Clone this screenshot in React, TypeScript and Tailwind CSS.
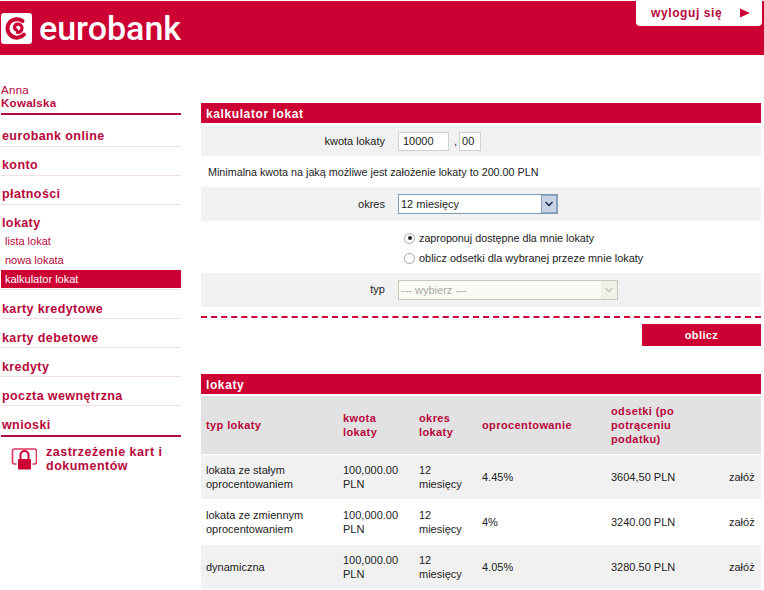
import { ChevronDown } from 'lucide-react';

const navTop = ['eurobank online', 'konto', 'płatności'];
const navBottom = ['karty kredytowe', 'karty debetowe', 'kredyty', 'poczta wewnętrzna'];

const deposits = [
  { type: ['lokata ze stałym', 'oprocentowaniem'], rate: '4.45%', interest: '3604,50 PLN', bg: 'bg-[#f1f1f1]' },
  { type: ['lokata ze zmiennym', 'oprocentowaniem'], rate: '4%', interest: '3240.00 PLN', bg: 'bg-white' },
  { type: ['dynamiczna'], rate: '4.05%', interest: '3280.50 PLN', bg: 'bg-[#f1f1f1]' },
];

const cols = 'grid grid-cols-[137px_76px_63px_129px_118px_37px] items-center';

function NavItem({ label, pad }: { label: string; pad: string }) {
  return (
    <div className={`h-[29px] flex items-center pl-px ${pad} border-b border-[#f0dfe4] text-[12.5px] font-bold tracking-[0.4px] text-[#b8073a]`}>
      {label}
    </div>
  );
}

function SectionBar({ label }: { label: string }) {
  return (
    <div className="bg-[#cc0033] text-white text-[12px] font-bold tracking-[0.6px] pl-[5px] pt-[2px] flex items-center h-full">
      {label}
    </div>
  );
}

function Logo() {
  return (
    <svg width="31" height="31" viewBox="0 0 31 31" className="shrink-0">
      <rect width="31" height="31" rx="3" fill="#fff" />
      <path d="M21.500 8C18.500 5.500 12.500 5.200 9 9c-4 4.500-3 11 1.500 14 4 2.700 9.500 2 12.500-1.500" fill="none" stroke="#cc0033" strokeWidth="4" strokeLinecap="round" />
      <path d="M15.500 17c-3-1-2.500-5.500 1-5.800 3-.2 5 2 4.300 4.800-.5 2-2.300 3.500-4.300 3.300" fill="none" stroke="#cc0033" strokeWidth="3.200" strokeLinecap="round" />
    </svg>
  );
}

export default function App() {
  return (
    <div className="w-[764px] h-[590px] overflow-hidden bg-white text-[11px] text-[#222] font-['Liberation_Sans',Arial,sans-serif]">
      <header className="h-[54px] mt-px bg-[#cc0033] flex justify-between">
        <div className="flex items-center gap-[7px] pl-px pt-px">
          <Logo />
          <span className="font-['Roboto',sans-serif] font-medium text-[34px] leading-none text-white pb-px">eurobank</span>
        </div>
        <div className="h-[26px] w-[126px] -mt-px mr-[2px] bg-white rounded-b-[4px] flex items-center justify-between pl-[15px] pr-[12px] text-[#b8073a] text-[12px] font-bold tracking-[0.6px]">
          wyloguj się
          <svg width="10" height="10" viewBox="0 0 10 10">
            <path d="M0 0.500 10 5 0 9.500z" fill="#cc0033" />
          </svg>
        </div>
      </header>

      <div className="flex">
        <aside className="w-[180px] ml-px mr-5 shrink-0 pt-[29px]">
          <div className="h-[31px] border-b-2 border-[#b30a3c] text-[11.5px] leading-[12px] text-[#b8073a] tracking-[0.3px]">
            <div>Anna</div>
            <div className="font-bold mt-px">Kowalska</div>
          </div>
          <div className="h-[3px]" />
          {navTop.map((n) => (
            <NavItem key={n} label={n} pad="pt-[8px]" />
          ))}
          <div className="h-[27px] flex items-center pl-px pt-[9px] text-[12.5px] font-bold tracking-[0.4px] text-[#b8073a]">lokaty</div>
          <div className="h-[19px] flex items-center pl-[4px] text-[#b8073a]">lista lokat</div>
          <div className="h-[19px] flex items-center pl-[4px] text-[#b8073a]">nowa lokata</div>
          <div className="h-[18px] flex items-center pl-[4px] bg-[#cc0033] text-white">kalkulator lokat</div>
          <div className="h-[2px] border-b border-[#f0dfe4]" />
          {navBottom.map((n) => (
            <NavItem key={n} label={n} pad="pt-[10px]" />
          ))}
          <div className="h-[29px] flex items-center pl-px pt-[10px] text-[12.5px] font-bold tracking-[0.4px] text-[#b8073a]">wnioski</div>
          <div className="h-[2px] bg-[#b30a3c]" />
          <div className="flex gap-[9px] pl-[10px] pt-[11px]">
            <svg width="26" height="22" viewBox="0 0 26 22" className="shrink-0">
              <rect x="1.500" y="1" width="24" height="15" rx="2" fill="none" stroke="#e0355f" strokeWidth="1.600" />
              <rect x="5.500" y="7" width="16" height="15" fill="#fff" />
              <path d="M9.500 11V7a4 4 0 0 1 8 0v4" fill="none" stroke="#cc0033" strokeWidth="2" />
              <rect x="7" y="11" width="13" height="10.500" rx="1" fill="#cc0033" />
            </svg>
            <div className="text-[12.5px] leading-[14px] font-bold tracking-[0.5px] text-[#b8073a] -mt-[3px]">
              zastrzeżenie kart i dokumentów
            </div>
          </div>
        </aside>

        <main className="w-[560px] pt-[48px]">
          <div className="h-[20px]">
            <SectionBar label="kalkulator lokat" />
          </div>
          <div className="mt-[3px] h-[30px] bg-[#f1f1f1] flex items-center">
            <span className="w-[184px] text-right">kwota lokaty</span>
            <div className="ml-[13px] w-[51px] h-[19px] bg-white border border-[#d0d0d0] flex items-center pl-[4px]">10000</div>
            <span className="ml-[5px] mr-[2px]">,</span>
            <div className="w-[22px] h-[19px] bg-white border border-[#d0d0d0] flex items-center pl-[2px]">00</div>
          </div>
          <p className="h-[31px] flex items-center pl-[7px] pt-[2px] text-[10.75px]">
            Minimalna kwota na jaką możliwe jest założenie lokaty to 200.00 PLN
          </p>
          <div className="h-[34px] bg-[#f1f1f1] flex items-center">
            <span className="w-[184px] text-right">okres</span>
            <div className="ml-[13px] w-[160px] h-[20px] bg-white border border-[#7f9db9] flex items-center justify-between pl-[2px]">
              12 miesięcy
              <span className="w-[16px] h-[18px] bg-[#c9d2e2] border border-[#8ea3c6] flex items-center justify-center">
                <ChevronDown size={12} strokeWidth={3.5} className="text-[#22324f]" />
              </span>
            </div>
          </div>
          <div className="h-[52px] pl-[203px] pt-[2px] flex flex-col justify-center gap-[6px]">
            <label className="flex items-center gap-[4px] h-[14px] text-[10.75px]">
              <span className="w-[11px] h-[11px] rounded-full bg-white border border-[#a8a8a8] flex items-center justify-center">
                <span className="w-[4px] h-[4px] rounded-full bg-[#222]" />
              </span>
              zaproponuj dostępne dla mnie lokaty
            </label>
            <label className="flex items-center gap-[4px] h-[14px] text-[10.95px]">
              <span className="w-[11px] h-[11px] rounded-full bg-white border border-[#a8a8a8]" />
              oblicz odsetki dla wybranej przeze mnie lokaty
            </label>
          </div>
          <div className="h-[34px] bg-[#f1f1f1] flex items-center">
            <span className="w-[184px] text-right pb-[2px]">typ</span>
            <div className="ml-[13px] w-[220px] h-[20px] bg-[#fbfbf6] border border-[#c9c7ba] flex items-center justify-between pl-[2px] text-[#a8a8a8]">
              --- wybierz ---
              <span className="w-[16px] h-[18px] bg-[#f1f1e8] flex items-center justify-center">
                <ChevronDown size={12} strokeWidth={3} className="text-[#c4c4b4]" />
              </span>
            </div>
          </div>
          <div className="mt-[9px] border-t-2 border-dashed border-[#cc0033]" />
          <div className="mt-[6px] flex justify-end">
            <button className="w-[119px] h-[22px] bg-[#cc0033] text-white text-[11px] font-bold tracking-[0.4px]">oblicz</button>
          </div>

          <div className="mt-[28px] h-[20px]">
            <SectionBar label="lokaty" />
          </div>
          <div className={`${cols} mt-[2px] h-[58px] pl-[5px] bg-[#e2e2e2] text-[#b8073a] font-bold tracking-[0.4px] leading-[14px]`}>
            <div>typ lokaty</div>
            <div>kwota<br />lokaty</div>
            <div>okres<br />lokaty</div>
            <div>oprocentowanie</div>
            <div>odsetki (po<br />potrąceniu<br />podatku)</div>
            <div />
          </div>
          {deposits.map((d) => (
            <div key={d.rate} className={`${cols} mt-px h-[44px] pl-[5px] leading-[14px] ${d.bg}`}>
              <div>
                {d.type.map((t) => (
                  <div key={t}>{t}</div>
                ))}
              </div>
              <div>100,000.00<br />PLN</div>
              <div>12<br />miesięcy</div>
              <div>{d.rate}</div>
              <div>{d.interest}</div>
              <div>załóż</div>
            </div>
          ))}
        </main>
      </div>
    </div>
  );
}
